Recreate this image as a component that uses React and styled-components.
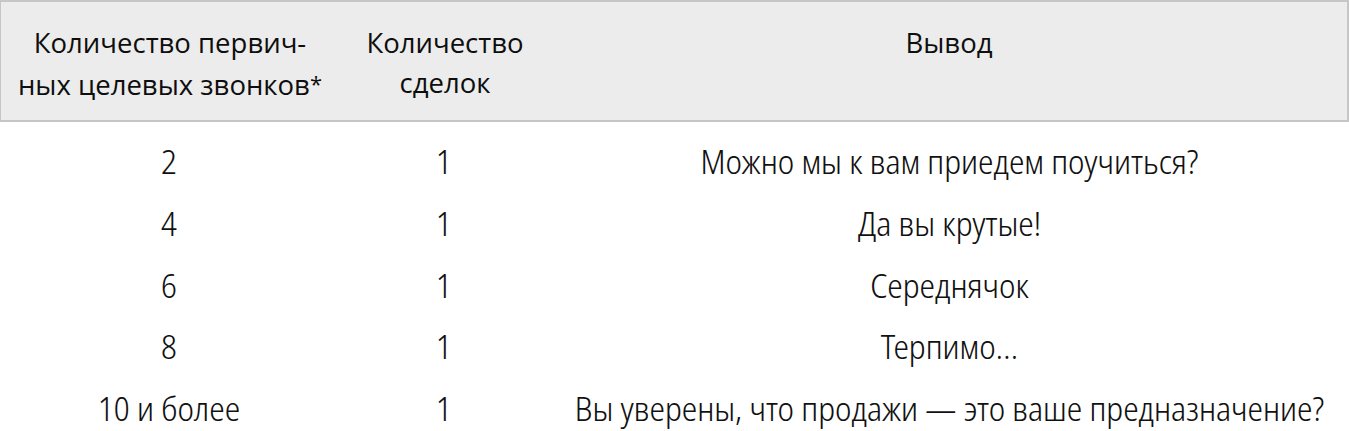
import React from "react";
import styled, { createGlobalStyle } from "styled-components";

const GlobalStyle = createGlobalStyle`
  html, body {
    margin: 0;
    padding: 0;
    background: #ffffff;
  }
  body {
    font-family: "Open Sans", "Noto Sans", sans-serif;
    color: #141414;
  }
`;

const COLUMNS = "338px 212px 1fr";

const Table = styled.div`
  width: 1349px;
  display: flex;
  flex-direction: column;
`;

const HeaderRow = styled.div`
  display: grid;
  grid-template-columns: ${COLUMNS};
  box-sizing: border-box;
  height: 122px;
  padding-top: 21px;
  background: #ececec;
  border: 2px solid #c6c6c6;
  border-left-width: 1px;
`;

const HeadCell = styled.div`
  font-family: "Open Sans", "Noto Sans", sans-serif;
  font-size: 27.5px;
  line-height: 40px;
  color: #0e0e0e;
  text-align: center;
  white-space: nowrap;
`;

const Mark = styled.span`
  font-size: 22px;
  vertical-align: 3px;
`;

const Body = styled.div`
  display: flex;
  flex-direction: column;
  padding-top: 9px;
`;

const BodyRow = styled.div`
  display: grid;
  grid-template-columns: ${COLUMNS};
  height: 61.75px;
`;

const Cell = styled.div`
  font-family: "Noto Sans Display", "Noto Sans", sans-serif;
  font-stretch: condensed;
  font-weight: 300;
  font-size: 32.7px;
  line-height: 61.75px;
  color: #111111;
  text-align: center;
  white-space: nowrap;
`;

const rows = [
  ["2", "1", "Можно мы к вам приедем поучиться?"],
  ["4", "1", "Да вы крутые!"],
  ["6", "1", "Середнячок"],
  ["8", "1", "Терпимо…"],
  ["10 и более", "1", "Вы уверены, что продажи — это ваше предназначение?"],
];

export default function App() {
  return (
    <>
      <GlobalStyle />
      <Table>
        <HeaderRow>
          <HeadCell>
            Количество первич-
            <br />
            ных целевых звонков<Mark>*</Mark>
          </HeadCell>
          <HeadCell>
            Количество
            <br />
            сделок
          </HeadCell>
          <HeadCell>Вывод</HeadCell>
        </HeaderRow>
        <Body>
          {rows.map((r, i) => (
            <BodyRow key={i}>
              {r.map((c, j) => (
                <Cell key={j}>{c}</Cell>
              ))}
            </BodyRow>
          ))}
        </Body>
      </Table>
    </>
  );
}
